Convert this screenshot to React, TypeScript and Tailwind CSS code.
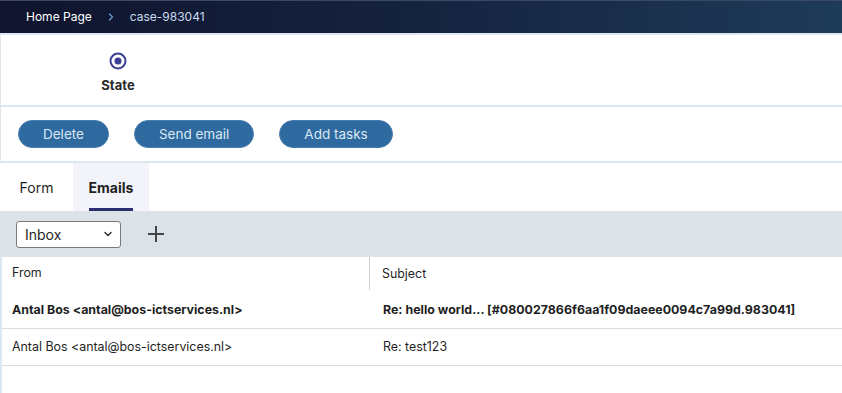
import { ChevronRight, ChevronDown } from "lucide-react";

const emails = [
  {
    from: "Antal Bos <antal@bos-ictservices.nl>",
    subject: "Re: hello world... [#080027866f6aa1f09daeee0094c7a99d.983041]",
    unread: true,
  },
  {
    from: "Antal Bos <antal@bos-ictservices.nl>",
    subject: "Re: test123",
    unread: false,
  },
];

export default function App() {
  return (
    <div
      className="min-h-screen bg-[#dde7ef] text-[#1f1f1f]"
      style={{ fontFamily: "Inter, 'Noto Sans', sans-serif" }}
    >
      {/* breadcrumb bar */}
      <header className="h-[33px] flex items-center pl-[26px] bg-gradient-to-r from-[#10142e] via-[#15233f] to-[#1e3b5a] border-t border-[#3a4a66] text-[12px]">
        <span className="text-white">Home Page</span>
        <ChevronRight size={12} strokeWidth={2.5} className="ml-[13px] mr-[13px] text-[#6a9fd2]" />
        <span className="text-[#c9dcef]">case-983041</span>
      </header>

      {/* state panel */}
      <section className="mt-[2px] ml-[1px] h-[70px] bg-white flex">
        <div className="w-[234px] flex flex-col items-center pt-[17px]">
          <svg width="18" height="18" viewBox="0 0 18 18">
            <circle cx="9" cy="9" r="7.5" fill="none" stroke="#3b3f93" strokeWidth="2" />
            <circle cx="9" cy="9" r="3.5" fill="#3b3f93" />
          </svg>
          <span className="mt-[6px] text-[13px] font-bold text-[#2a2a2a]">State</span>
        </div>
      </section>

      {/* actions */}
      <section className="mt-[2px] ml-[1px] h-[54px] bg-white flex items-center gap-[25px] pl-[17px]">
        {["Delete", "Send email", "Add tasks"].map((label) => (
          <button
            key={label}
            className="h-[28px] px-[24px] rounded-full bg-[#2e6aa0] border border-[#4a80b0] text-[13.5px] text-[#dbe7f2]"
          >
            {label}
          </button>
        ))}
      </section>

      {/* tabs */}
      <nav className="mt-[2px] h-[48px] bg-white flex text-[14px]">
        <div className="w-[73px] flex items-center justify-center">Form</div>
        <div className="relative w-[76px] flex items-center justify-center bg-[#f3f4f9] font-bold">
          Emails
          <span className="absolute bottom-0 left-[16px] right-[16px] h-[3px] bg-[#2b2e6e]" />
        </div>
      </nav>

      {/* toolbar */}
      <div className="h-[46px] bg-[#dbe3e8] flex items-center pl-[16px] gap-[28px]">
        <div className="w-[105px] h-[27px] bg-white border border-[#7a7a7a] rounded-[3px] flex items-center justify-between pl-[8px] pr-[6px] text-[14px]">
          <span>Inbox</span>
          <ChevronDown size={12} strokeWidth={3} className="text-[#333]" />
        </div>
        <svg width="18" height="18" viewBox="0 0 18 18" className="-ml-[2px]">
          <path d="M9 1v16M1 9h16" stroke="#444" strokeWidth="2" fill="none" />
        </svg>
      </div>

      {/* email table */}
      <div className="ml-[2px] bg-white min-h-[137px] text-[12.4px]">
        <div className="flex h-[35px] items-center">
          <div className="w-[368px] h-[33px] self-start flex items-center pl-[10px] border-r border-[#cfcfcf]">From</div>
          <div className="pl-[12px]">Subject</div>
        </div>
        {emails.map((m, i) => (
          <div
            key={i}
            className={`flex h-[37px] items-center border-b border-[#dcdcdc] ${m.unread ? "font-bold" : ""}`}
          >
            <div className="w-[369px] pl-[10px]">{m.from}</div>
            <div className="pl-[12px]">{m.subject}</div>
          </div>
        ))}
      </div>
    </div>
  );
}
